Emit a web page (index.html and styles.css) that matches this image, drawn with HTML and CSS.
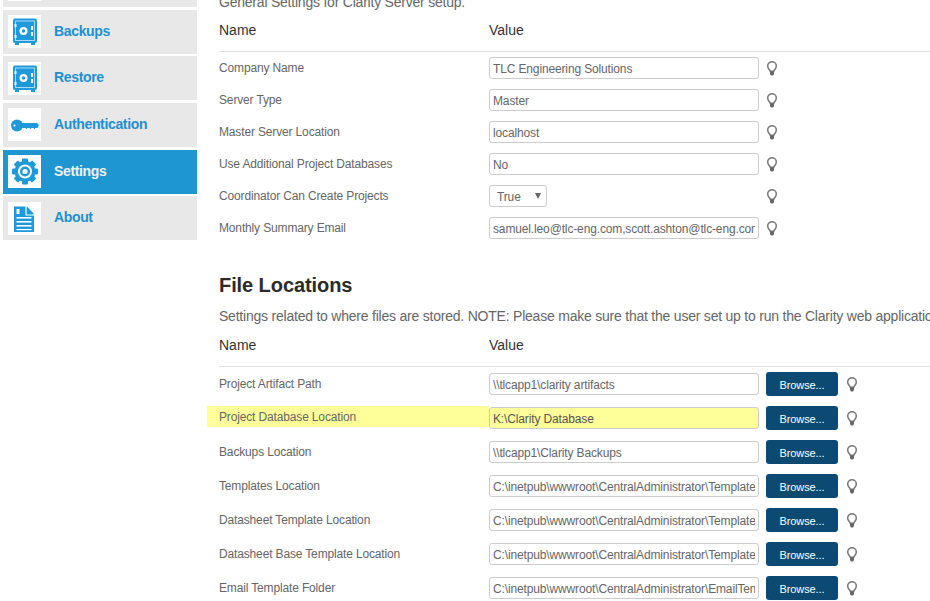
FILE: index.html
```html
<!DOCTYPE html>
<html lang="en">
<head>
<meta charset="utf-8">
<title>Clarity Settings</title>
<link rel="stylesheet" href="styles.css">
</head>
<body>
<svg class="defs" width="0" height="0" aria-hidden="true">
  <defs>
    <symbol id="safe" viewBox="0 0 33 33">
      <rect x="7" y="27" width="4" height="3" fill="#1e9ada"/>
      <rect x="23" y="27" width="4" height="3" fill="#1e9ada"/>
      <rect x="5" y="3.5" width="24" height="24.5" rx="2" fill="#1e9ada"/>
      <rect x="7.5" y="6" width="19" height="19.5" fill="none" stroke="#fff" stroke-width="0.9" stroke-opacity="0.7"/>
      <circle cx="15.5" cy="16" r="4" fill="#fff"/>
      <circle cx="15.5" cy="16" r="1.7" fill="#1e9ada"/>
      <rect x="23" y="11" width="2" height="4" fill="#fff"/>
      <rect x="23" y="17" width="2" height="4" fill="#fff"/>
      <rect x="6.5" y="9" width="2" height="3" fill="#fff"/>
      <rect x="6.5" y="20" width="2" height="3" fill="#fff"/>
    </symbol>
    <symbol id="bulb" viewBox="0 0 12 15">
      <path d="M4.2 10.2C3.8 8.6 1.7 7.6 1.7 5A4.3 4.2 0 0 1 10.3 5C10.3 7.6 8.2 8.6 7.8 10.2Z" fill="#fff" stroke="#777" stroke-width="1.5" stroke-linejoin="round"/>
      <path d="M4 10.5H8V13L7 14.5H5L4 13Z" fill="#666"/>
    </symbol>
  </defs>
</svg>

<div class="page">
  <nav class="sidebar">
    <a class="nav-item">
      <span class="nav-icon"></span>
    </a>
    <a class="nav-item">
      <span class="nav-icon"><svg class="glyph" viewBox="0 0 33 33"><use href="#safe"/></svg></span>
      <span>Backups</span>
    </a>
    <a class="nav-item">
      <span class="nav-icon"><svg class="glyph" viewBox="0 0 33 33"><use href="#safe"/></svg></span>
      <span>Restore</span>
    </a>
    <a class="nav-item">
      <span class="nav-icon">
        <svg class="glyph" viewBox="0 0 33 33">
          <circle cx="9" cy="17.5" r="6" fill="#1e9ada"/>
          <circle cx="6.5" cy="17.5" r="1.1" fill="#fff"/>
          <path d="M13 15H29L31 17L29.5 20H27.5L26.5 21.2L25.5 20H23.5L22.5 21.2L21.5 20H19.5L18.5 21.2L17.5 20H13Z" fill="#1e9ada"/>
        </svg>
      </span>
      <span>Authentication</span>
    </a>
    <a class="nav-item active">
      <span class="nav-icon">
        <svg class="glyph" viewBox="0 0 33 33">
          <g fill="#1e9ada">
            <rect x="14" y="3.5" width="6" height="26" rx="1"/>
            <rect x="14" y="3.5" width="6" height="26" rx="1" transform="rotate(45 17 16.5)"/>
            <rect x="14" y="3.5" width="6" height="26" rx="1" transform="rotate(90 17 16.5)"/>
            <rect x="14" y="3.5" width="6" height="26" rx="1" transform="rotate(135 17 16.5)"/>
            <circle cx="17" cy="16.5" r="10.5"/>
          </g>
          <circle cx="17" cy="16.5" r="7" fill="#fff"/>
          <circle cx="17" cy="16.5" r="5" fill="#1e9ada"/>
          <circle cx="17" cy="16.5" r="2.6" fill="#fff"/>
        </svg>
      </span>
      <span>Settings</span>
    </a>
    <a class="nav-item">
      <span class="nav-icon">
        <svg class="glyph" viewBox="0 0 33 33">
          <path d="M6 4.5H18L26 13V30H6Z" fill="#1e9ada"/>
          <path d="M19 4.5L26 12H19Z" fill="#1e9ada"/>
          <path d="M18 4V13H26.5" fill="none" stroke="#fff" stroke-width="1.2"/>
          <rect x="8.5" y="7" width="3" height="5" fill="#fff"/>
          <rect x="8.5" y="15" width="15" height="1.6" fill="#fff"/>
          <rect x="8.5" y="19" width="15" height="1.6" fill="#fff"/>
          <rect x="8.5" y="23" width="15" height="1.6" fill="#fff"/>
          <rect x="8.5" y="27" width="15" height="1.2" fill="#fff"/>
        </svg>
      </span>
      <span>About</span>
    </a>
  </nav>

  <main class="content">
    <p class="lead">General Settings for Clarity Server setup.</p>
    <div class="table-head"><span class="col-name">Name</span><span>Value</span></div>

    <div class="row">
      <label class="row-label">Company Name</label>
      <div class="field"><input class="text-input" value="TLC Engineering Solutions"></div>
      <svg class="bulb"><use href="#bulb"/></svg>
    </div>
    <div class="row">
      <label class="row-label">Server Type</label>
      <div class="field"><input class="text-input" value="Master"></div>
      <svg class="bulb"><use href="#bulb"/></svg>
    </div>
    <div class="row">
      <label class="row-label">Master Server Location</label>
      <div class="field"><input class="text-input" value="localhost"></div>
      <svg class="bulb"><use href="#bulb"/></svg>
    </div>
    <div class="row">
      <label class="row-label">Use Additional Project Databases</label>
      <div class="field"><input class="text-input" value="No"></div>
      <svg class="bulb"><use href="#bulb"/></svg>
    </div>
    <div class="row">
      <label class="row-label">Coordinator Can Create Projects</label>
      <div class="field">
        <div class="select-box"><select class="select"><option>True</option><option>False</option></select><span class="select-arrow"></span></div>
      </div>
      <svg class="bulb"><use href="#bulb"/></svg>
    </div>
    <div class="row">
      <label class="row-label">Monthly Summary Email</label>
      <div class="field"><input class="text-input" value="samuel.leo@tlc-eng.com,scott.ashton@tlc-eng.com"></div>
      <svg class="bulb"><use href="#bulb"/></svg>
    </div>

    <h2 class="section-title">File Locations</h2>
    <p class="section-lead">Settings related to where files are stored. NOTE: Please make sure that the user set up to run the Clarity web application has access to these locations.</p>
    <div class="table-head"><span class="col-name">Name</span><span>Value</span></div>

    <div class="row file-row">
      <label class="row-label">Project Artifact Path</label>
      <div class="field"><input class="text-input" value="\\tlcapp1\clarity artifacts"></div>
      <button class="browse">Browse...</button>
      <svg class="bulb"><use href="#bulb"/></svg>
    </div>
    <div class="row file-row">
      <label class="row-label marked">Project Database Location</label>
      <div class="field"><input class="text-input marked-input" value="K:\Clarity Database"></div>
      <button class="browse">Browse...</button>
      <svg class="bulb"><use href="#bulb"/></svg>
    </div>
    <div class="row file-row">
      <label class="row-label">Backups Location</label>
      <div class="field"><input class="text-input" value="\\tlcapp1\Clarity Backups"></div>
      <button class="browse">Browse...</button>
      <svg class="bulb"><use href="#bulb"/></svg>
    </div>
    <div class="row file-row">
      <label class="row-label">Templates Location</label>
      <div class="field"><input class="text-input" value="C:\inetpub\wwwroot\CentralAdministrator\Templates"></div>
      <button class="browse">Browse...</button>
      <svg class="bulb"><use href="#bulb"/></svg>
    </div>
    <div class="row file-row">
      <label class="row-label">Datasheet Template Location</label>
      <div class="field"><input class="text-input" value="C:\inetpub\wwwroot\CentralAdministrator\Templates"></div>
      <button class="browse">Browse...</button>
      <svg class="bulb"><use href="#bulb"/></svg>
    </div>
    <div class="row file-row">
      <label class="row-label">Datasheet Base Template Location</label>
      <div class="field"><input class="text-input" value="C:\inetpub\wwwroot\CentralAdministrator\Templates"></div>
      <button class="browse">Browse...</button>
      <svg class="bulb"><use href="#bulb"/></svg>
    </div>
    <div class="row file-row">
      <label class="row-label">Email Template Folder</label>
      <div class="field"><input class="text-input" value="C:\inetpub\wwwroot\CentralAdministrator\EmailTemplates"></div>
      <button class="browse">Browse...</button>
      <svg class="bulb"><use href="#bulb"/></svg>
    </div>
  </main>
</div>
</body>
</html>
```

FILE: styles.css
```css
* { box-sizing: border-box; }
html, body { margin: 0; height: 100%; overflow: hidden; background: #fff; }
body { font-family: "Liberation Sans", Arial, sans-serif; color: #333; }
.defs { display: block; height: 0; }

.page { display: flex; height: 601px; padding-left: 3px; overflow: hidden; }

.sidebar {
  flex: 0 0 194px;
  display: flex;
  flex-direction: column;
  gap: 2.7px;
  margin-top: -37.1px;
}
.nav-item {
  flex: 0 0 44px;
  display: flex;
  align-items: center;
  gap: 13px;
  padding-left: 5px;
  background: #e8e8e8;
  color: #1e90d2;
  font-size: 14px;
  font-weight: 700;
  letter-spacing: -0.35px;
}
.nav-item > span:last-child:not(.nav-icon) { margin-bottom: 2px; }
.nav-item.active { background: #1e96d0; color: #eef3f6; }
.nav-icon { flex: 0 0 33px; height: 33px; background: #fff; display: block; }
.glyph { display: block; width: 33px; height: 33px; }

.content {
  flex: 1;
  min-width: 0;
  margin-top: -8px;
  padding-left: 22px;
  overflow: hidden;
}
.lead, .section-lead {
  margin: 0;
  font-size: 14px;
  line-height: 20px;
  color: #666;
  white-space: nowrap;
  letter-spacing: -0.22px;
}
.table-head {
  display: flex;
  margin-top: 8px;
  padding-bottom: 11px;
  border-bottom: 1px solid #e0e0e0;
  font-size: 14px;
  line-height: 20px;
  color: #333;
}
.col-name { flex: 0 0 270px; }

.section-title {
  margin: 27px 0 7px;
  font-size: 20px;
  line-height: 28px;
  font-weight: 700;
  color: #2b2b2b;
  letter-spacing: -0.08px;
}
.section-lead + .table-head { margin-top: 9px; }

.row { display: flex; align-items: center; height: 32px; }
.file-row { height: 34px; }
.row-label { flex: 0 0 270px; font-size: 12px; line-height: 16px; color: #666; letter-spacing: -0.15px; }
.row-label.marked {
  margin-left: -12px;
  margin-bottom: 3px;
  padding-top: 1px;
  padding-left: 12px;
  flex-basis: 282px;
  line-height: 20px;
  background: #ffff99;
}
.field { flex: 0 0 270px; margin-right: 7px; }
.text-input, .select {
  display: block;
  height: 22px;
  border: 1px solid #ccc;
  border-radius: 3px;
  background: #fff;
  font: 12px "Liberation Sans", Arial, sans-serif;
  letter-spacing: -0.14px;
  color: #666;
  outline: none;
}
.text-input { width: 100%; padding: 1px 3px 0; }
.text-input.marked-input { background: #ffff99; color: #555; }

.select-box { position: relative; width: 58px; }
.select { width: 100%; padding: 1px 0 0 7px; appearance: none; -webkit-appearance: none; }
.select-arrow {
  position: absolute;
  right: 6px;
  top: 8px;
  border-left: 3px solid transparent;
  border-right: 3px solid transparent;
  border-top: 6px solid #666;
  pointer-events: none;
}

.browse {
  flex: 0 0 72px;
  height: 24px;
  margin-right: 8px;
  padding: 1px 0 0;
  border: 0;
  border-radius: 3px;
  background: #0c4a74;
  color: #fff;
  font: 11px "Liberation Sans", Arial, sans-serif;
  letter-spacing: -0.1px;
}
.bulb { flex: 0 0 12px; width: 12px; height: 15px; }
```
